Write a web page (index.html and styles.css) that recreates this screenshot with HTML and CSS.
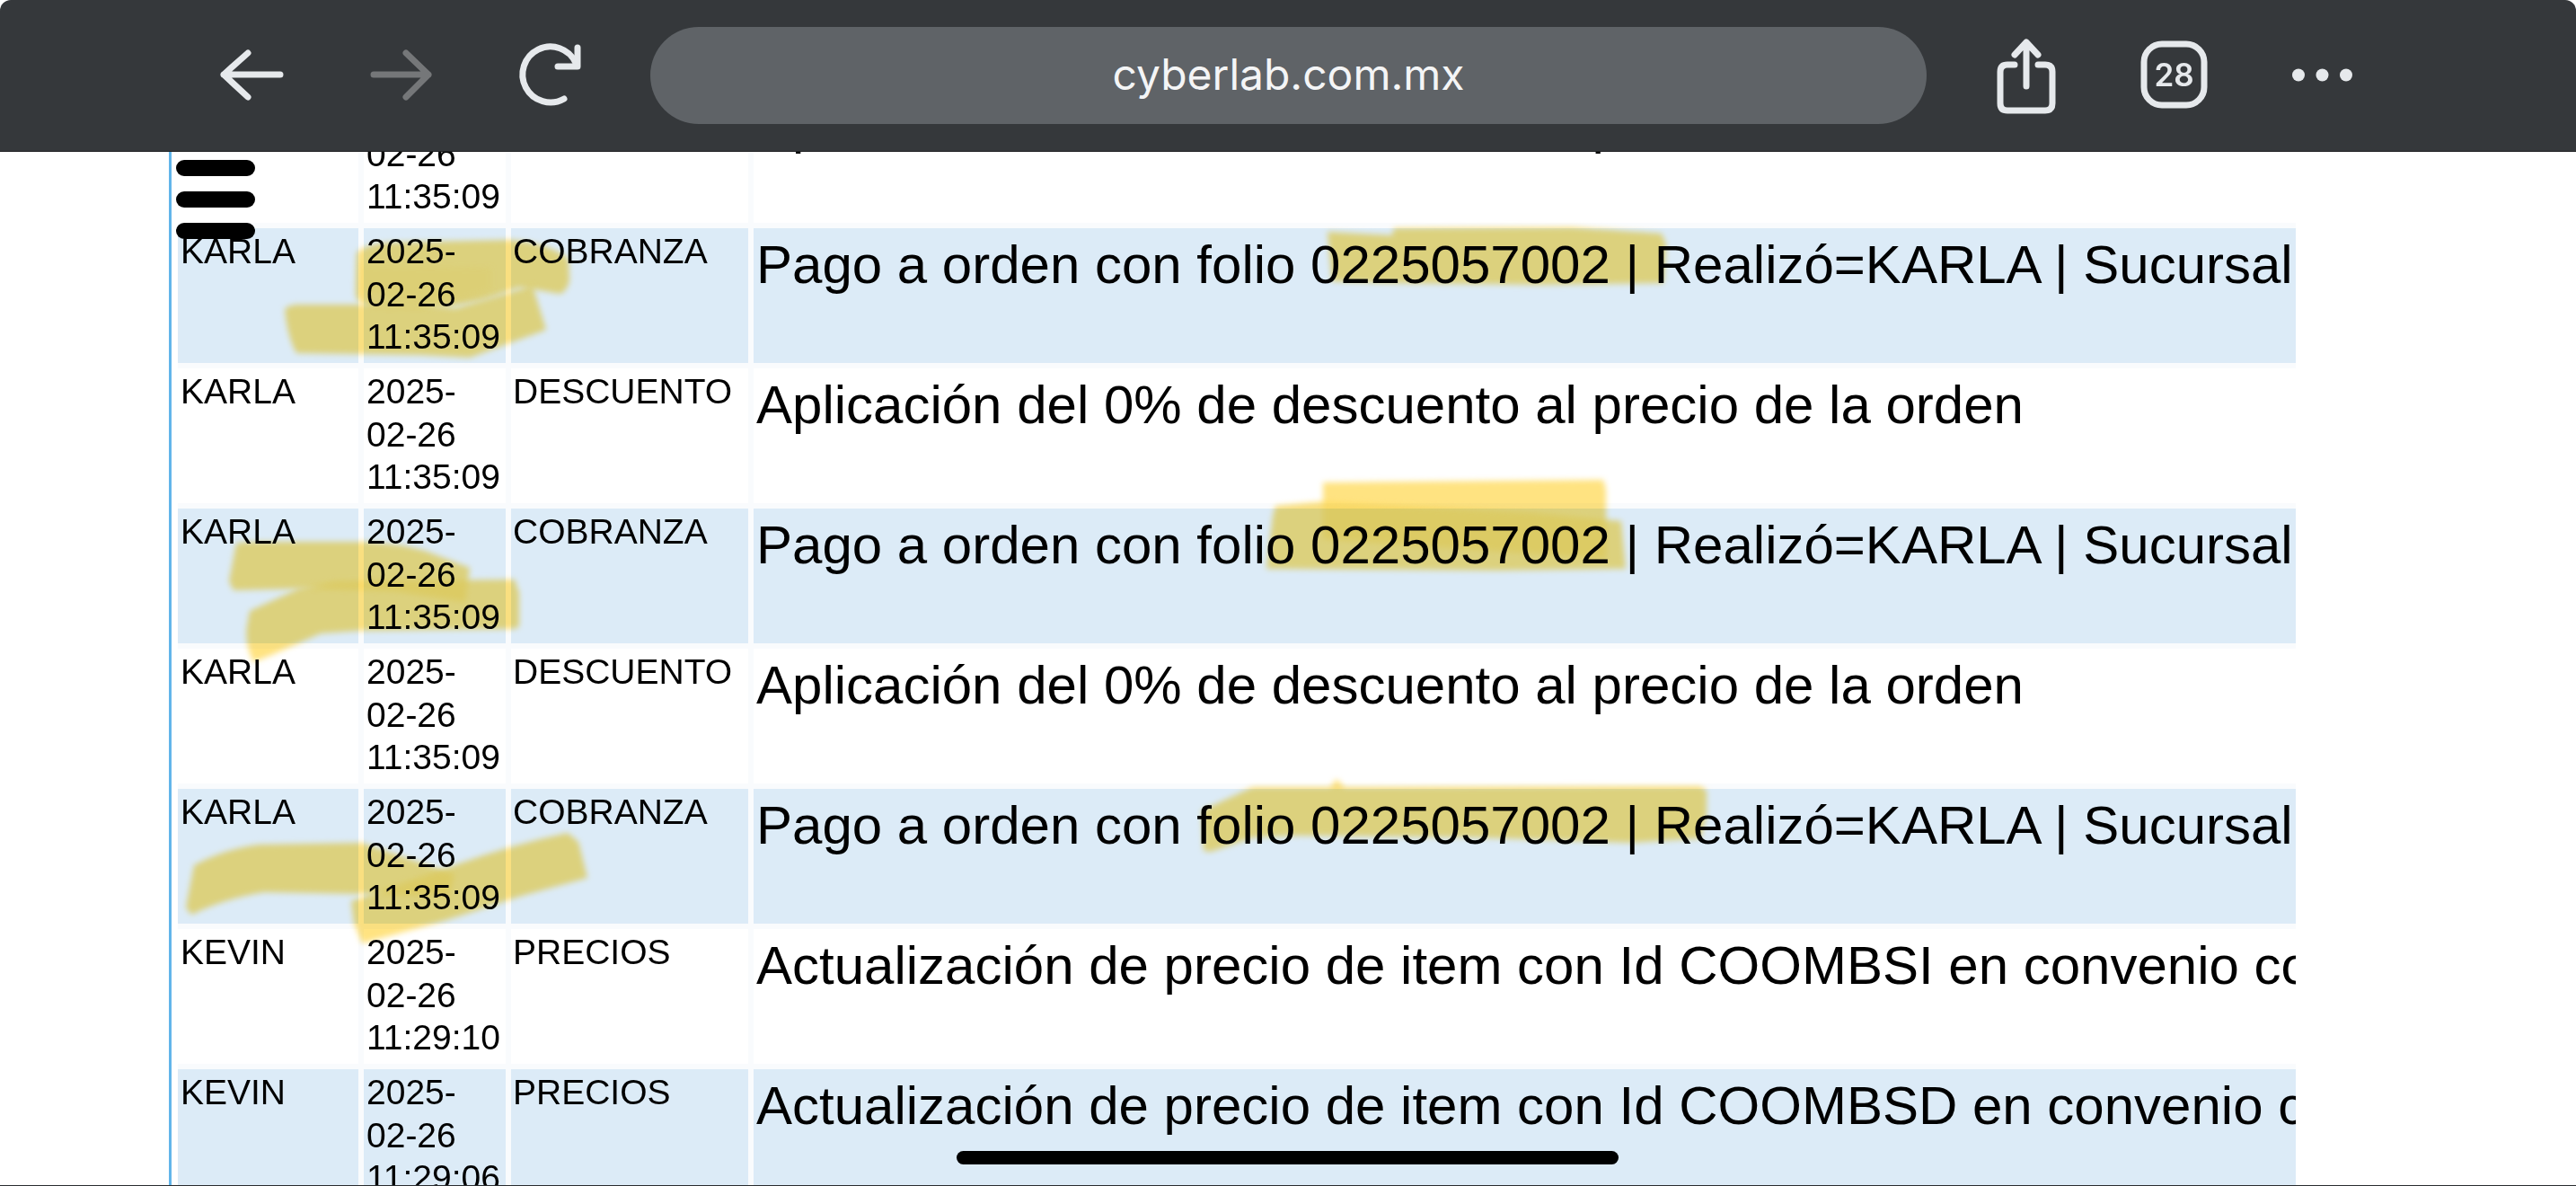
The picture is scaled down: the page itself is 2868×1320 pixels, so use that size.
FILE: index.html
```html
<!DOCTYPE html>
<html lang="es">
<head>
<meta charset="utf-8">
<title>cyberlab.com.mx</title>
<link rel="stylesheet" href="styles.css">
</head>
<body>
<div class="screen">
  <main class="frame">
    <div class="log">
      <div class="cell">KARLA</div><div class="cell">2025-<br>02-26<br>11:35:09</div><div class="cell type">DESCUENTO</div><div class="cell big">Aplicación del 0% de descuento al precio de la orden</div>
      <div class="cell alt">KARLA</div><div class="cell alt">2025-<br>02-26<br>11:35:09</div><div class="cell type alt">COBRANZA</div><div class="cell alt big">Pago a orden con folio 0225057002 | Realizó=KARLA | Sucursal</div>
      <div class="cell">KARLA</div><div class="cell">2025-<br>02-26<br>11:35:09</div><div class="cell type">DESCUENTO</div><div class="cell big">Aplicación del 0% de descuento al precio de la orden</div>
      <div class="cell alt">KARLA</div><div class="cell alt">2025-<br>02-26<br>11:35:09</div><div class="cell type alt">COBRANZA</div><div class="cell alt big">Pago a orden con folio 0225057002 | Realizó=KARLA | Sucursal</div>
      <div class="cell">KARLA</div><div class="cell">2025-<br>02-26<br>11:35:09</div><div class="cell type">DESCUENTO</div><div class="cell big">Aplicación del 0% de descuento al precio de la orden</div>
      <div class="cell alt">KARLA</div><div class="cell alt">2025-<br>02-26<br>11:35:09</div><div class="cell type alt">COBRANZA</div><div class="cell alt big">Pago a orden con folio 0225057002 | Realizó=KARLA | Sucursal</div>
      <div class="cell">KEVIN</div><div class="cell">2025-<br>02-26<br>11:29:10</div><div class="cell type">PRECIOS</div><div class="cell big">Actualización de precio de item con Id COOMBSI en convenio con</div>
      <div class="cell alt">KEVIN</div><div class="cell alt">2025-<br>02-26<br>11:29:06</div><div class="cell type alt">PRECIOS</div><div class="cell alt big">Actualización de precio de item con Id COOMBSD en convenio con</div>
    </div>
  </main>

  <svg class="marks" viewBox="0 0 2868 1320" width="2868" height="1320" aria-hidden="true">
    <g class="mark-group">
      <path d="M397 282 Q405 272 433 270 L567 267 Q610 270 633 288 L634 313 Q630 326 623 327 L600 323 L577 320 Q545 332 533 335 Q500 342 467 343 L417 342 Q398 340 396 328 Z"/>
      <path d="M317 344 Q322 339 333 339 L467 339 L507 343 L593 318 L608 367 L523 398 L467 395 L330 393 Q320 375 317 344 Z"/>
      <path class="mark-soft" d="M400 295 L547 298 L547 322 L500 340 L400 325 Z"/>
      <path d="M1478 258 L1550 262 L1552 254 L1750 253 Q1820 258 1850 260 L1855 272 L1852 315 L1717 317 L1550 315 L1483 313 Z"/>
      <path d="M263 605 Q268 603 290 603 L407 603 Q445 605 473 613 L523 632 L518 670 L440 658 L340 655 L260 657 L255 647 Z"/>
      <path d="M278 680 L333 655 L373 647 L573 645 L578 660 L578 697 L573 700 L400 702 L357 705 L300 730 L282 737 Q272 715 275 697 Z"/>
      <path d="M1473 537 L1785 534 L1788 545 L1788 622 L1473 600 Z"/>
      <path d="M1420 563 L1473 558 L1700 570 L1805 580 L1810 633 L1667 635 L1410 633 L1417 575 Z"/>
      <path d="M216 963 Q250 945 288 940 L403 938 L506 973 L500 997 L403 995 L294 993 Q250 1000 213 1018 L207 1010 Z"/>
      <path d="M391 1003 L506 963 Q570 940 632 927 L644 937 L654 977 L581 997 L494 1025 L403 1050 L394 1027 Z"/>
      <path d="M1338 902 L1395 876 L1481 876 L1488 867 L1497 876 L1893 875 L1900 880 L1900 907 L1893 933 L1816 938 L1638 932 L1446 930 L1395 932 L1348 948 L1340 947 Z"/>
    </g>
  </svg>

  <div class="burger" aria-label="Menú"><span></span><span></span><span></span></div>

  <header class="toolbar">
    <svg class="toolbar-icons" viewBox="0 0 2868 168" width="2868" height="168" aria-hidden="true">
      <g class="ico">
        <path d="M312 83 H249 M276 59 L249 83 L276 108"/>
        <path class="ico-off" d="M416 83 H477 M452 59 L477 83 L452 108"/>
        <path d="M628 110 A31 31 0 1 1 641 70"/>
        <path d="M643 53 V74 H621"/>
        <path class="ico-mic" d="M2077 65 A10 10 0 0 1 2097 65 V82 A10 10 0 0 1 2077 82 Z M2069 77 V82 A18 18 0 0 0 2105 82 V77 M2087 100 V109 M2073 109 H2101"/>
        <path d="M2243 72 H2235 Q2227 72 2227 80 V115 Q2227 123 2235 123 H2277 Q2285 123 2285 115 V80 Q2285 72 2277 72 H2269 M2256 96 V47 M2243 61 L2256 47 L2269 61"/>
        <rect x="2387" y="49" width="67" height="68" rx="20"/>
      </g>
      <g class="dots">
        <circle cx="2559" cy="83.500" r="7"/>
        <circle cx="2585.500" cy="83.500" r="7"/>
        <circle cx="2612" cy="83.500" r="7"/>
      </g>
    </svg>
    <div class="urlbar">cyberlab.com.mx</div>
    <div class="tabcount">28</div>
  </header>

  <div class="home"></div>
</div>
</body>
</html>
```
FILE: styles.css
```css
* { box-sizing: border-box; }
html, body { margin: 0; padding: 0; background: #fff; }
.screen {
  position: relative;
  width: 2868px;
  height: 1320px;
  overflow: hidden;
  border-bottom: 1px solid #2a2d30;
  font-family: "Liberation Sans", Arial, sans-serif;
  color: #000;
}
.frame {
  height: 100%;
  margin-left: 188px;
  padding: 98px 0 0 7px;
  border-left: 3px solid #62b5ea;
}
.log {
  display: grid;
  grid-template-columns: 201px 158px 264px 1717px;
  grid-auto-rows: 150px;
  gap: 6px;
  width: 2358px;
  background: #f9fbfd;
}
.cell {
  background: #fff;
  padding: 2px 0 0 3px;
  font-size: 39px;
  line-height: 47.500px;
  overflow: hidden;
}
.type { padding-left: 2px; }
.alt { background: #dcebf7; }
.big {
  padding-top: 5px;
  font-size: 60px;
  line-height: 72px;
  white-space: nowrap;
}
.marks {
  position: absolute;
  top: 0;
  left: 0;
  mix-blend-mode: multiply;
  pointer-events: none;
}
.mark-group path {
  fill: #ffdc62;
  fill-opacity: .8;
  stroke: none;
  filter: blur(3px);
}
.mark-group .mark-soft { fill-opacity: .25; }
.burger {
  position: absolute;
  top: 178px;
  left: 196px;
  width: 88px;
  display: flex;
  flex-direction: column;
  gap: 17px;
}
.burger span {
  display: block;
  height: 18px;
  border-radius: 9px;
  background: #000;
}
.toolbar {
  position: absolute;
  top: 0;
  left: 0;
  width: 2868px;
  height: 169px;
  background: #35383b;
  border-bottom: 1px solid #1f2123;
  border-radius: 12px 12px 0 0;
}
.toolbar-icons { position: absolute; top: 0; left: 0; }
.ico {
  fill: none;
  stroke: #e6e9ec;
  stroke-width: 7;
  stroke-linecap: round;
  stroke-linejoin: round;
}
.ico .ico-off { stroke: #757779; }
.ico .ico-mic { stroke: #d9dbdd; stroke-width: 5.500; }
.dots { fill: #e6e9ec; }
.urlbar {
  position: absolute;
  top: 30px;
  left: 724px;
  width: 1421px;
  height: 108px;
  border-radius: 54px;
  background: #5f6367;
  color: #f4f5f6;
  font-family: Inter, "Liberation Sans", sans-serif;
  font-size: 48px;
  line-height: 106px;
  text-align: center;
}
.tabcount {
  position: absolute;
  top: 49px;
  left: 2387px;
  width: 67px;
  height: 68px;
  color: #e6e9ec;
  font-family: Inter, "Liberation Sans", sans-serif;
  font-size: 35px;
  font-weight: 600;
  line-height: 68px;
  text-align: center;
}
.home {
  position: absolute;
  top: 1281px;
  left: 1065px;
  width: 737px;
  height: 15px;
  border-radius: 8px;
  background: #000;
}
```
